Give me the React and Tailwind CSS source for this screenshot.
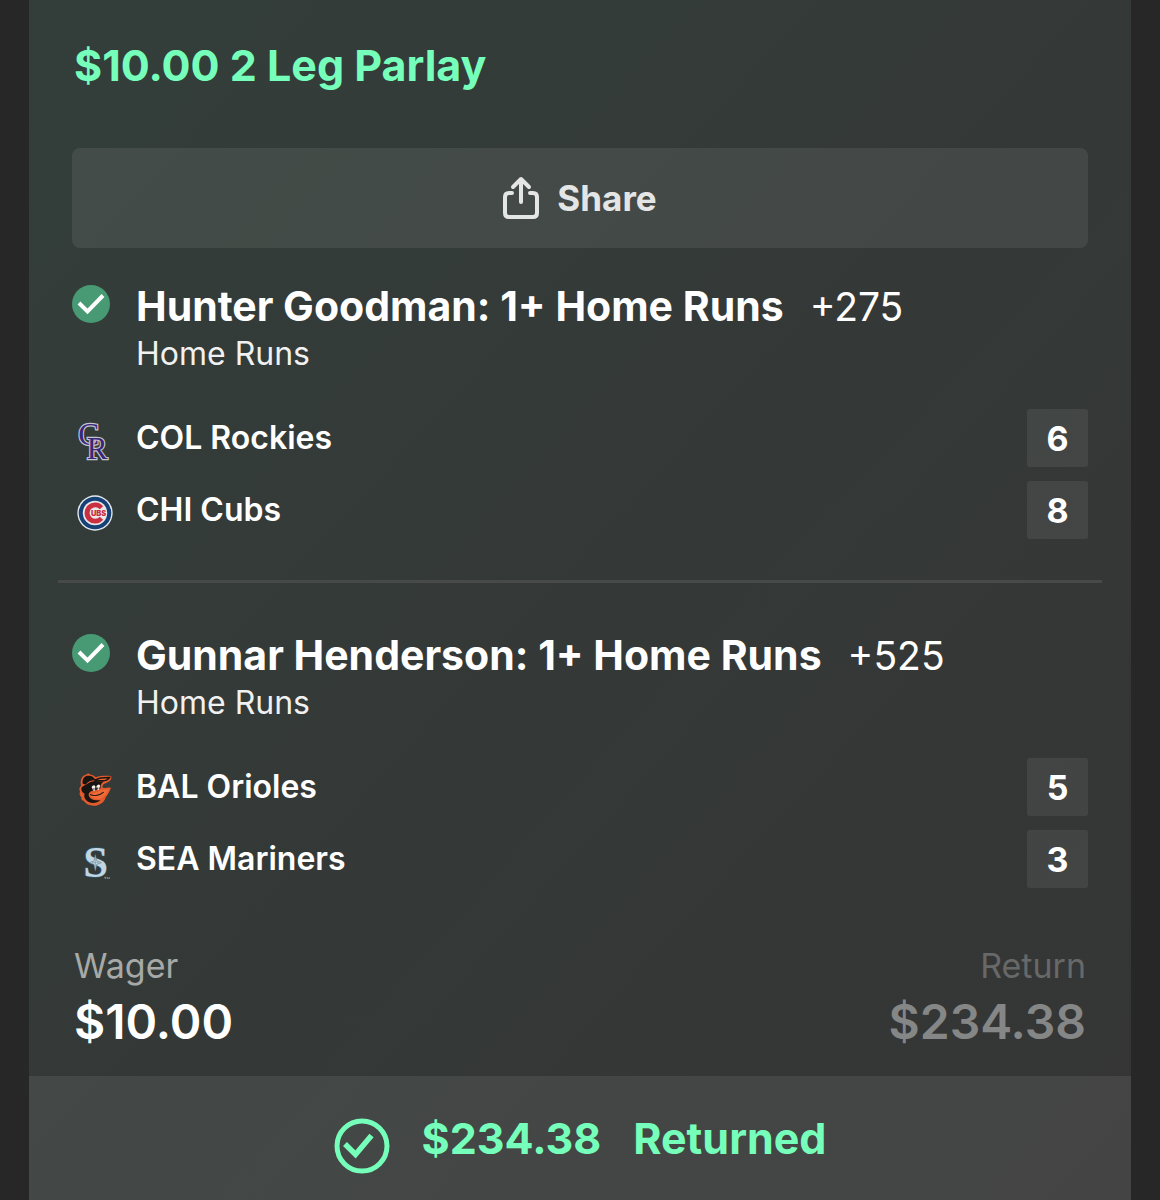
import React from "react";

const RockiesLogo = () => (
  <svg viewBox="0 0 108 156" className="w-9 h-[52px]" aria-hidden="true">
    <text
      fontFamily="Liberation Serif, serif"
      fontSize="94"
      stroke="#c3c6cd"
      strokeWidth="7"
      paintOrder="stroke"
      fill="#38277a"
    >
      <tspan x="4" y="90">
        C
      </tspan>
      <tspan x="29" y="131">
        R
      </tspan>
    </text>
  </svg>
);

const CubsLogo = () => (
  <svg viewBox="0 0 106 106" className="w-9 h-9" aria-hidden="true">
    <circle cx="53" cy="53" r="52" fill="#e6eaee" />
    <circle cx="53" cy="53" r="48" fill="#164177" />
    <circle cx="53" cy="53" r="36" fill="#e9e6e8" />
    <path
      d="M77 33 A31 31 0 1 0 77 73 L67 64 A17 17 0 1 1 67 42 Z"
      fill="#c92f40"
    />
    <text
      x="41"
      y="61"
      fontSize="22"
      fontWeight="900"
      fontFamily="Inter, sans-serif"
      fill="#c92f40"
      stroke="#f1ecee"
      strokeWidth="3"
      paintOrder="stroke"
    >
      UBS
    </text>
  </svg>
);

const OriolesLogo = () => (
  <svg viewBox="0 0 104 104" className="w-9 h-9" aria-hidden="true">
    {/* Silueta exterior */}
    <path
      d="M12 40 C7 22 16 9 27 7 C30 3 36 4 38 7 C45 8 51 12 54 15 C68 11 84 10 99 12 C101 19 96 27 86 31 C78 34 74 36 73 44 C80 49 88 43 98 46 C94 58 88 66 83 73 C80 85 72 92 61 95 C47 101 27 96 20 84 C14 82 11 78 13 73 C7 68 6 62 9 57 C5 50 7 43 12 40 Z"
      fill="#e35a2c"
    />
    {/* Gorra */}
    <path
      d="M17 35 C14 22 20 13 30 11 C41 9 50 14 53 24 C42 23 32 27 26 36 Z"
      fill="#171412"
    />
    {/* Cabeza */}
    <path
      d="M13 45 C20 38 28 37 34 32 C46 24 60 28 78 27 C71 31 67 37 68 47 C60 52 54 52 48 54 C40 54 32 60 34 68 C38 80 53 84 68 81 C56 93 36 92 26 81 C21 76 20 69 22 63 C15 60 11 53 13 45 Z"
      fill="#171412"
    />
    {/* Visera */}
    <path
      d="M52 23 C66 16 80 16 94 16 C88 25 76 26 65 25 C60 24 56 25 52 28 Z"
      fill="#ee6530"
      stroke="#171412"
      strokeWidth="4"
    />
    {/* Pico */}
    <path
      d="M35 62 C47 64 55 58 65 54 C73 50 83 52 92 49 C87 61 79 73 67 77 C52 80 37 74 35 62 Z"
      fill="#f06a35"
    />
    <path
      d="M38 65 C50 71 66 67 77 58"
      fill="none"
      stroke="#171412"
      strokeWidth="3"
    />
    {/* Ojos */}
    <path
      d="M42 43 Q48 34 53 41 L52 54 Q46 56 45 49 Z M56 41 Q62 33 67 39 L63 52 Q58 53 57 47 Z"
      fill="#f5f2ee"
    />
    <circle cx="49" cy="49" r="2" fill="#171412" />
    <circle cx="60" cy="47" r="2" fill="#171412" />
  </svg>
);

const MarinersLogo = () => (
  <svg viewBox="0 0 108 156" className="w-9 h-[52px]" aria-hidden="true">
    <text
      x="19"
      y="124"
      fontSize="134"
      fontWeight="700"
      fontFamily="Liberation Serif, serif"
      fill="#c3d5e0"
      stroke="#2b5a70"
      strokeWidth="4"
      paintOrder="stroke"
    >
      S
    </text>
    <path
      d="M55 56 L59 75 L73 80 L59 85 L55 104 L51 85 L37 80 L51 75 Z"
      fill="#d6e2e8"
      stroke="#5d8293"
      strokeWidth="2"
    />
    <path d="M55 66 V94 M45 80 H65" stroke="#6f8f9e" strokeWidth="2" />
    <path
      d="M82 124 H88 M85 124 V129 M91 129 V124 L94 127 L97 124 V129"
      fill="none"
      stroke="#a5aeb2"
      strokeWidth="2"
    />
  </svg>
);

const legs = [
  {
    id: 1,
    title: "Hunter Goodman: 1+ Home Runs",
    odds: "+275",
    market: "Home Runs",
    teams: [
      { name: "COL Rockies", score: 6, Logo: RockiesLogo },
      { name: "CHI Cubs", score: 8, Logo: CubsLogo },
    ],
  },
  {
    id: 2,
    title: "Gunnar Henderson: 1+ Home Runs",
    odds: "+525",
    market: "Home Runs",
    teams: [
      { name: "BAL Orioles", score: 5, Logo: OriolesLogo },
      { name: "SEA Mariners", score: 3, Logo: MarinersLogo },
    ],
  },
];

const Leg = ({ leg }) => (
  <section className="px-[43px]">
    <div className="flex">
      <div className="w-16 shrink-0 pt-[5px]">
        <svg viewBox="0 0 38 38" className="w-[38px] h-[38px]" aria-hidden="true">
          <circle cx="19" cy="19" r="19" fill="#479a73" />
          <path
            d="M7 18 L15.5 26.5 L31 10.5"
            fill="none"
            stroke="#fff"
            strokeWidth="4"
          />
        </svg>
      </div>
      <div>
        <div className="flex items-baseline gap-[26px] leading-[52px]">
          <h2 className="text-[41px] font-bold leading-[52px]">{leg.title}</h2>
          <span className="text-[39px] font-normal">{leg.odds}</span>
        </div>
        <p className="text-[32px] leading-[42px] text-[#f0f1f0]">
          {leg.market}
        </p>
      </div>
    </div>

    <ul className="mt-[34px] flex flex-col gap-[14px]">
      {leg.teams.map(({ name, score, Logo }) => (
        <li key={name} className="flex h-[58px] items-center">
          <div className="w-16 shrink-0 pl-[5px] pt-[6px]">
            <Logo />
          </div>
          <span className="grow text-[32px] font-semibold">{name}</span>
          <span className="flex h-full w-[61px] items-center justify-center rounded-[3px] bg-white/7 text-[34px] font-bold">
            {score}
          </span>
        </li>
      ))}
    </ul>
  </section>
);

const App = () => {
  return (
    <div className="min-h-screen bg-[#272727] px-[29px] font-['Inter',sans-serif] text-white">
      <main className="bg-linear-to-br from-[#333e3a] via-[#343937] to-[#353535]">
        <h1 className="px-[45px] pt-[39px] text-[43px] font-bold leading-[52px] text-[#76ffba]">
          $10.00 2 Leg Parlay
        </h1>

        <div className="mt-[57px] px-[43px]">
          <button
            type="button"
            className="flex h-[100px] w-full items-center justify-center gap-[18px] rounded-lg bg-white/8 text-[35px] font-bold text-[#e4e6e5]"
          >
            <svg
              viewBox="0 0 36 44"
              className="h-11 w-9"
              fill="none"
              stroke="currentColor"
              strokeWidth="4"
              strokeLinecap="round"
              strokeLinejoin="round"
              aria-hidden="true"
            >
              <path d="M9 17 H6 Q2 17 2 21 V37 Q2 41 6 41 H30 Q34 41 34 37 V21 Q34 17 30 17 H27" />
              <path d="M18 26 V3 M10 11 L18 3 L26 11" />
            </svg>
            Share
          </button>
        </div>

        <div className="pt-8">
          {legs.map((leg, i) => (
            <React.Fragment key={leg.id}>
              {i > 0 && (
                <hr className="mx-[29px] mt-[41px] mb-[46px] border-t-3 border-[#484a49]" />
              )}
              <Leg leg={leg} />
            </React.Fragment>
          ))}
        </div>

        <dl className="flex justify-between px-[45px] pt-[58px] pb-[26px]">
          <div>
            <dt className="text-[34px] leading-10 text-[#a6a9a7]">Wager</dt>
            <dd className="mt-2 text-[48px] font-semibold leading-[56px]">
              $10.00
            </dd>
          </div>
          <div className="text-right">
            <dt className="text-[34px] leading-10 text-[#676868]">Return</dt>
            <dd className="mt-2 text-[48px] font-semibold leading-[56px] text-[#858686]">
              $234.38
            </dd>
          </div>
        </dl>

        <footer className="flex h-[124px] items-start justify-center gap-8 bg-white/8 pt-9 text-[43px] font-bold leading-[52px] text-[#76ffba]">
          <svg
            viewBox="0 0 56 56"
            className="mt-[6px] h-14 w-14"
            fill="none"
            stroke="currentColor"
            aria-hidden="true"
          >
            <circle cx="28" cy="28" r="25" strokeWidth="5" />
            <path d="M11 26 L21.5 36.5 L37.5 17.5" strokeWidth="5.5" />
          </svg>
          <span>$234.38</span>
          <span>Returned</span>
        </footer>
      </main>
    </div>
  );
};

export default App;
